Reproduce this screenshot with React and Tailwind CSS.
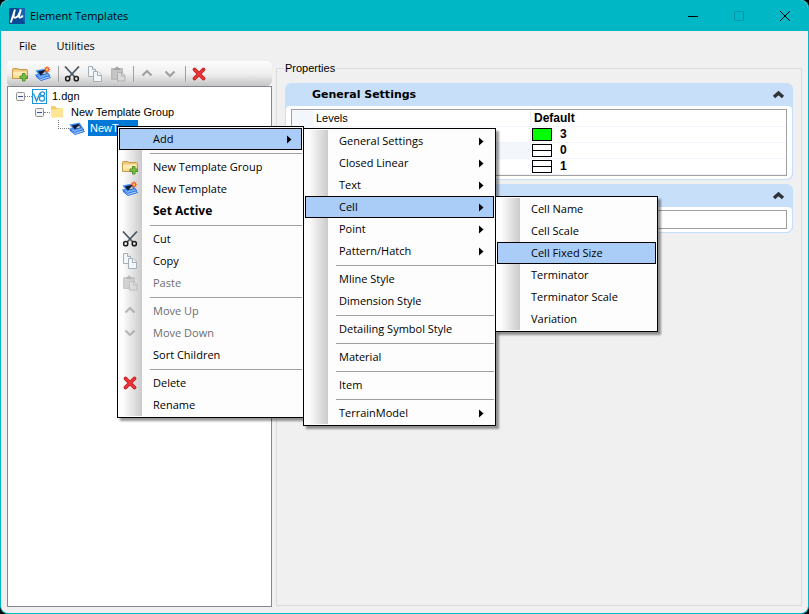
const MENU_ITEMS = [
  {
    label: "Add",
    open: true,
    items: [
      { label: "General Settings", arrow: true },
      { label: "Closed Linear", arrow: true },
      { label: "Text", arrow: true },
      {
        label: "Cell",
        open: true,
        items: [
          { label: "Cell Name" },
          { label: "Cell Scale" },
          { label: "Cell Fixed Size", active: true },
          { label: "Terminator" },
          { label: "Terminator Scale" },
          { label: "Variation" },
        ],
      },
      { label: "Point", arrow: true },
      { label: "Pattern/Hatch", arrow: true },
      null,
      { label: "Mline Style" },
      { label: "Dimension Style" },
      null,
      { label: "Detailing Symbol Style" },
      null,
      { label: "Material" },
      null,
      { label: "Item" },
      null,
      { label: "TerrainModel", arrow: true },
    ],
  },
  null,
  { label: "New Template Group", icon: FolderPlusIcon },
  { label: "New Template", icon: NewTemplateIcon },
  { label: "Set Active", bold: true },
  null,
  { label: "Cut", icon: CutIcon },
  { label: "Copy", icon: CopyIcon },
  { label: "Paste", icon: PasteIcon, disabled: true },
  null,
  { label: "Move Up", icon: UpIcon, disabled: true },
  { label: "Move Down", icon: DownIcon, disabled: true },
  { label: "Sort Children" },
  null,
  { label: "Delete", icon: DeleteIcon },
  { label: "Rename" },
];

const TOOLBAR = [
  { label: "New Template Group", icon: FolderPlusIcon },
  { label: "New Template", icon: NewTemplateIcon },
  null,
  { label: "Cut", icon: CutIcon },
  { label: "Copy", icon: CopyIcon },
  { label: "Paste", icon: PasteIcon },
  null,
  { label: "Move Up", icon: UpIcon },
  { label: "Move Down", icon: DownIcon },
  null,
  { label: "Delete", icon: DeleteIcon },
];

const VALUES = [
  { value: "3", swatch: "bg-[#00ff00]" },
  { value: "0", line: true, shaded: true },
  { value: "1", line: true },
];

function FolderPlusIcon() {
  return (
    <svg width="16" height="16" viewBox="0 0 16 16">
      <path d="M.5 12.500v-9q0-1 1-1h4l1.500 1h7.500q1 0 1 1v8z" fill="#eec97c" stroke="#c69a4a" />
      <path d="M1 12V6.500q0-1 1-1h11.500q1 0 1 1V12z" fill="#fdebb5" />
      <path d="M1 12V9.500h13.500V12z" fill="#f8dc93" />
      <path d="M10.500 7.500H13V10h2.500v2.500H13V15h-2.500v-2.500H8V10h2.500z" fill="#9bd35c" stroke="#4c8a26" />
      <path d="M11.750 8v6.500M8.500 11.250H15" stroke="#6cb53a" />
    </svg>
  );
}

function TemplateShape() {
  return (
    <>
      <path d="M1 10.500 6 14.500 15.500 11.500 13 9.500z" fill="#b4d6fa" stroke="#2f6fe6" />
      <path d="M.5 9 5.500 12.500 15 9.500 12.500 7.500z" fill="#78b4f8" stroke="#2f6fe6" />
      <path d="M.5 4.500 10.500 2.500 14 8 5 10.500z" fill="#3f8cf3" />
      <path d="M3 5.500 9.800 4 12 7.500 5.500 9.200z" fill="#0f1a2e" />
      <path d="M6.500 8.500 10 5.500 11.500 7.500z" fill="#c3d2e6" />
    </>
  );
}

function TemplateIcon() {
  return (
    <svg width="16" height="16" viewBox="0 0 16 16">
      <TemplateShape />
    </svg>
  );
}

function NewTemplateIcon() {
  return (
    <svg width="16" height="16" viewBox="0 0 16 16">
      <TemplateShape />
      <path d="M12 0v7M8.500 3.500h7M9.500 1l5 5M14.500 1l-5 5" stroke="#f58a4e" />
      <circle cx="12" cy="3.500" r="2.200" fill="#f2402a" />
      <circle cx="12" cy="3.500" r="1.200" fill="#ffd84a" />
    </svg>
  );
}

function CutIcon() {
  return (
    <svg width="16" height="16" viewBox="0 0 16 16" fill="none">
      <path d="M1 .5 10.800 11M15 .5 5.200 11" stroke="#4b5661" strokeWidth="1.700" />
      <circle cx="3.700" cy="12.700" r="2.100" stroke="#1d1d1d" strokeWidth="1.500" />
      <circle cx="12.300" cy="12.700" r="2.100" stroke="#1d1d1d" strokeWidth="1.500" />
    </svg>
  );
}

function CopyIcon() {
  return (
    <svg width="16" height="16" viewBox="0 0 16 16" fill="#f4f7fa" stroke="#a3aeb9">
      <path d="M1.500.5h4l3 3v7h-7z" />
      <path d="M5.500.5v3h3" />
      <path d="M6.500 5.500H11L14.500 9v6.500h-8z" />
      <path d="M10.500 5.500v4h4" />
    </svg>
  );
}

function PasteIcon() {
  return (
    <svg width="16" height="16" viewBox="0 0 16 16">
      <rect x="1" y="2" width="12" height="12" rx="1" fill="#b9b9b9" />
      <rect x="2.500" y="4" width="9" height="8.500" fill="#c6c6c6" />
      <path d="M4 4V2h1.500q.2-1.500 1.500-1.500T8.500 2H10v2z" fill="#a3a3a3" />
      <path d="M7.500 6.500H12l3 3V15H7.500z" fill="#dadada" stroke="#b0b0b0" />
      <path d="M11.500 6.500V10H15" fill="none" stroke="#b0b0b0" />
    </svg>
  );
}

function UpIcon() {
  return (
    <svg width="16" height="16" viewBox="0 0 16 16" fill="none">
      <path d="M3.500 9.500 8 5l4.500 4.500" stroke="#a0a0a0" strokeWidth="2.200" />
    </svg>
  );
}

function DownIcon() {
  return (
    <svg width="16" height="16" viewBox="0 0 16 16" fill="none">
      <path d="M3.500 5.500 8 10l4.500-4.500" stroke="#a0a0a0" strokeWidth="2.200" />
    </svg>
  );
}

function DeleteIcon() {
  return (
    <svg width="16" height="16" viewBox="0 0 16 16" fill="none">
      <path d="M3.500 3.500l9 9M12.500 3.500l-9 9" stroke="#c3161c" strokeWidth="3.800" strokeLinecap="round" />
      <path d="M3.500 3.500l9 9M12.500 3.500l-9 9" stroke="#e8363a" strokeWidth="2.200" strokeLinecap="round" />
    </svg>
  );
}

function FolderIcon() {
  return (
    <svg width="14" height="14" viewBox="0 0 14 14">
      <path d="M1 1h4l1.500 2H13v9.500L1 11.500z" fill="#f3cf6b" />
      <path d="M1 12V4.500h5L7.500 3.500 13 3v8.500L3 13z" fill="#ffe596" />
    </svg>
  );
}

function V8Icon() {
  return (
    <svg width="15" height="15" viewBox="0 0 15 15" fill="none">
      <rect x=".5" y=".5" width="14" height="14" fill="#fff" stroke="#1b93d8" />
      <path d="M1.500 4.500 4.500 12 8 4" stroke="#1b93d8" strokeWidth="1.300" />
      <ellipse cx="10.500" cy="4.800" rx="2.100" ry="2" stroke="#1b93d8" strokeWidth="1.200" />
      <ellipse cx="10" cy="9.500" rx="2.600" ry="2.600" stroke="#1b93d8" strokeWidth="1.200" />
    </svg>
  );
}

function AppIcon() {
  return (
    <svg width="16" height="16" viewBox="0 0 16 16" fill="none">
      <rect width="16" height="16" rx="1" fill="#0a4a94" />
      <path d="M9 0h7v16z" fill="#1763b0" />
      <path
        d="M6 1.500 1.800 14.500M5.400 3.500 4.600 7.500q-.2 2.500 2 2.100Q9.500 9 11.800 1.500L10.200 7.600q-.5 2.200 1 2 1.500-.2 2.600-2.100"
        stroke="#fff"
        strokeWidth="1.900"
      />
    </svg>
  );
}

function Menu({ items, className }) {
  return (
    <ul
      className={`absolute z-10 border border-black bg-[#fdfdfd] p-px shadow-[3px_3px_2px_rgba(0,0,0,0.4)] ${className}`}
    >
      <li
        aria-hidden="true"
        className="absolute inset-y-px left-0 w-6 bg-linear-to-r from-[#fdfdfd] from-20% to-[#cbcbcb]"
      />
      {items.map((item, i) =>
        item ? <MenuItem key={item.label} {...item} /> : (
          <li key={i} className="relative h-1.5 pt-[3px] pl-[31px]">
            <hr className="border-[#a0a0a0]" />
          </li>
        ),
      )}
    </ul>
  );
}

function MenuItem({ label, icon: Icon, open, active, bold, disabled, arrow, items }) {
  return (
    <li className="relative">
      <button
        disabled={disabled}
        className={`relative flex h-[22px] w-full items-center border pr-[9px] pl-[2px] text-left ${
          open || active ? "border-black bg-[#aacdf8]" : "border-transparent"
        } ${disabled ? "text-[#6d6d6d]" : "text-black"} ${bold ? "text-[12px] font-bold" : ""}`}
      >
        <span className={`w-[31px] shrink-0 ${disabled ? "opacity-70" : ""}`}>{Icon && <Icon />}</span>
        <span className="flex-1 whitespace-nowrap">{label}</span>
        {(arrow || items) && (
          <svg width="5" height="9" viewBox="0 0 5 9">
            <path d="M0 .5 4.500 4.500 0 8.500z" />
          </svg>
        )}
      </button>
      {items && (
        <Menu items={items} className={`top-0 left-full ml-px ${label === "Add" ? "w-[193px]" : "w-[163px]"}`} />
      )}
    </li>
  );
}

function Expander() {
  return (
    <svg width="9" height="9" viewBox="0 0 9 9" className="shrink-0">
      <rect x=".5" y=".5" width="8" height="8" rx="1" fill="#f4f4f4" stroke="#919191" />
      <path d="M2 4.500h5" stroke="#3456a8" />
    </svg>
  );
}

function Dots({ className }) {
  return <span className={`h-px shrink-0 border-t border-dotted border-[#808080] ${className}`} />;
}

function Panel({ title, children }) {
  return (
    <section className="rounded-md border border-[#c8dffa] bg-[#c8dffa]">
      <h2 className="flex h-[22px] items-center justify-between pr-[7px] pl-[26px] font-['DejaVu_Sans'] text-[11px] font-bold">
        <span>{title}</span>
        <button aria-label="Collapse">
          <svg width="13" height="10" viewBox="0 0 13 10" fill="none">
            <path d="M2 7 6.500 3 11 7" stroke="#2f3338" strokeWidth="3.400" />
          </svg>
        </button>
      </h2>
      <div className="rounded-t rounded-b-md bg-white px-[5px] py-[3px]">{children}</div>
    </section>
  );
}

export default function App() {
  return (
    <div className="h-screen bg-black font-['Open_Sans',sans-serif] text-[11px] leading-4 text-black">
      <div className="relative flex h-full flex-col rounded-lg border border-t-0 border-[#00b7c6] bg-[#f0f0f0]">
        <header className="flex h-[31px] shrink-0 items-center rounded-t-lg bg-[#00b7c6] pl-2">
          <AppIcon />
          <h1 className="flex-1 pl-[5px]">Element Templates</h1>
          <button aria-label="Minimize" className="flex w-[46px] justify-center">
            <svg width="10" height="10" viewBox="0 0 10 10"><path d="M0 5.500h10" stroke="#000" /></svg>
          </button>
          <button aria-label="Maximize" disabled className="flex w-[46px] justify-center">
            <svg width="10" height="10" viewBox="0 0 10 10" fill="none">
              <rect x=".5" y=".5" width="9" height="9" rx="1" stroke="#00939f" />
            </svg>
          </button>
          <button aria-label="Close" className="flex w-[46px] justify-center">
            <svg width="10" height="10" viewBox="0 0 10 10"><path d="M0 0l10 10M10 0 0 10" stroke="#000" /></svg>
          </button>
        </header>

        <nav className="flex h-[30px] shrink-0 items-center gap-5 pl-[18px]">
          <button>File</button>
          <button>Utilities</button>
        </nav>

        <main className="flex min-h-0 flex-1 gap-1 px-1.5 pb-1.5">
          <div className="flex w-[265px] shrink-0 flex-col">
            <div className="flex h-[25px] shrink-0 items-center gap-[7px] rounded-l-sm rounded-r-md bg-linear-to-b from-[#fcfcfc] via-[#f0f0f0] to-[#c4c4c4] pl-[5px]">
              {TOOLBAR.map((tool, i) =>
                tool ? (
                  <button key={tool.label} aria-label={tool.label}>
                    <tool.icon />
                  </button>
                ) : (
                  <span key={i} className="-mr-[2px] h-4 w-px bg-[#a0a0a0]" />
                ),
              )}
            </div>

            <ul className="flex-1 border border-[#828790] bg-white pt-px font-['Liberation_Sans']">
              <li className="flex h-4 items-center pl-2">
                <Expander />
                <Dots className="w-[7px]" />
                <V8Icon />
                <span className="pl-[5px]">1.dgn</span>
              </li>
              <li className="flex h-4 items-center pl-[27px]">
                <Expander />
                <Dots className="w-[6px]" />
                <FolderIcon />
                <span className="pl-[7px]">New Template Group</span>
              </li>
              <li className="flex h-4 items-center pl-[50px]">
                <span className="mb-[7px] h-[9px] w-[11px] shrink-0 border-b border-l border-dotted border-[#808080]" />
                <TemplateIcon />
                <span className="ml-[3px] h-4 w-[50px] bg-[#0078d7] pl-[2px] text-white">NewT</span>
              </li>
            </ul>
          </div>

          <fieldset className="mb-px flex min-w-0 flex-1 flex-col border border-[#dcdcdc] px-2 pt-2">
            <legend className="-ml-px px-px font-['Liberation_Sans'] leading-[14px]">Properties</legend>
            <div className="flex flex-col gap-1">
              <Panel title="General Settings">
                <div className="border border-[#a0a0a0]">
                  <table className="w-full table-fixed border-separate border-spacing-0 font-['Liberation_Sans'] leading-[15px]">
                    <tbody>
                      <tr>
                        <td className="h-[17px] w-[22px] bg-[#f3f6fb] p-0" />
                        <td className="w-[216px] border-b border-[#f0f3fa] p-0 pl-[2px]">Levels</td>
                        <td className="border-b border-l border-[#f0f3fa] p-0 pl-[3px] text-[12px] font-bold">Default</td>
                      </tr>
                      {VALUES.map(({ value, swatch, line, shaded }) => (
                        <tr key={value}>
                          <td className="h-4 bg-[#f3f6fb] p-0" />
                          <td className={`border-b border-[#f0f3fa] p-0 ${shaded ? "bg-[#f3f6fb]" : ""}`} />
                          <td className="border-b border-l border-[#f0f3fa] p-0 pl-px text-[12px] font-bold">
                            <div className="flex items-center gap-2">
                              <span className={`flex h-[13px] w-5 items-center border border-black ${swatch ?? "bg-white"}`}>
                                {line && <span className="h-px w-full bg-black" />}
                              </span>
                              {value}
                            </div>
                          </td>
                        </tr>
                      ))}
                    </tbody>
                  </table>
                </div>
              </Panel>
              <Panel>
                <div className="h-[19px] border border-[#a0a0a0]" />
              </Panel>
            </div>
          </fieldset>
        </main>

        <Menu items={MENU_ITEMS} className="top-[126px] left-[116px] w-[187px]" />
      </div>
    </div>
  );
}
